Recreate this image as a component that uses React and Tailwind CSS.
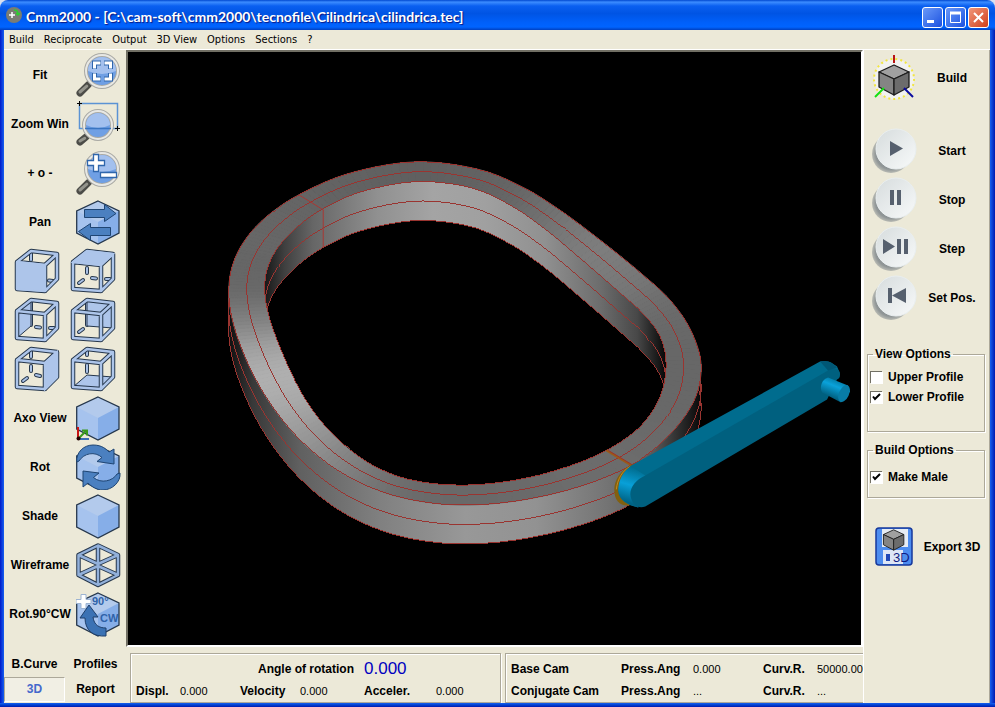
import { useState } from "react";

const MENU = ["Build", "Reciprocate", "Output", "3D View", "Options", "Sections", "?"];

// Cam body stations going round the ring: outer x, outer y, inner x, inner y, grey level
const STATIONS = [
  [299, 195, 323, 210, 100], [350, 174, 358, 193, 98], [415, 160, 418, 180, 96],
  [480, 170, 471, 188, 98], [523, 188, 509, 205, 104], [560, 210, 543, 227, 114],
  [603, 242, 580, 258, 128], [640, 273, 615, 289, 118], [671, 300, 644, 314, 108],
  [691, 330, 660, 336, 104], [702, 367, 667, 363, 103], [696, 400, 661, 398, 104],
  [667, 438, 641, 427, 106], [632, 466, 607, 451, 108], [580, 487, 565, 468, 108],
  [520, 501, 515, 481, 106], [463, 506, 463, 486, 105], [410, 500, 413, 481, 108],
  [370, 487, 380, 469, 118], [333, 468, 350, 450, 134], [300, 440, 325, 426, 152],
  [275, 410, 305, 399, 168], [256, 380, 291, 372, 176], [243, 351, 280, 346, 160],
  [233, 322, 270, 320, 128], [229, 295, 265, 294, 106], [232, 269, 267, 272, 103],
  [243, 243, 276, 251, 103], [266, 218, 295, 229, 102],
];

const WALL = 39;
const STEPS = 8;

// Fourth-difference fairing, takes the small wobble out of the loop without shrinking it
const fair = (pts) => {
  const n = pts.length;
  return pts.map((p, i) =>
    p.map((v, k) => {
      const at = (o) => pts[(i + o + n) % n][k];
      return v - (at(-2) - 4 * at(-1) + 6 * v - 4 * at(1) + at(2)) / 16;
    })
  );
};

// Closed Catmull-Rom through all the stations
const sampleStations = (stations) => {
  const n = stations.length;
  const out = [];
  for (let i = 0; i < n; i++) {
    const [a, b, c, d] = [-1, 0, 1, 2].map((k) => stations[(i + k + n) % n]);
    for (let s = 0; s < STEPS; s++) {
      const t = s / STEPS;
      out.push(
        b.map((v, k) =>
          0.5 * (2 * v + (c[k] - a[k]) * t + (2 * a[k] - 5 * v + 4 * c[k] - d[k]) * t * t + (3 * v - a[k] - 3 * c[k] + d[k]) * t * t * t)
        )
      );
    }
  }
  return out;
};

const SAMPLES = sampleStations(fair(STATIONS));
const toPath = (pts, dy = 0) => "M" + pts.map(([x, y]) => `${x.toFixed(1)},${(y + dy).toFixed(1)}`).join("L") + "Z";
const OUTER = SAMPLES.map((p) => [p[0], p[1]]);
const INNER = SAMPLES.map((p) => [p[2], p[3]]);
const MIDDLE = SAMPLES.map((p) => [(p[0] + p[2]) / 2, (p[1] + p[3]) / 2]);

const CamScene = () => (
  <svg viewBox="128 52 734 594" className="block h-full w-full" preserveAspectRatio="xMidYMid meet" role="img" aria-label="Cam">
    <defs>
      <linearGradient id="outerWall" gradientUnits="userSpaceOnUse" x1="229" y1="0" x2="702" y2="0">
        <stop offset="0" stopColor="#101010" />
        <stop offset="0.05" stopColor="#383838" />
        <stop offset="0.15" stopColor="#606060" />
        <stop offset="0.32" stopColor="#808080" />
        <stop offset="0.5" stopColor="#989898" />
        <stop offset="0.65" stopColor="#929292" />
        <stop offset="0.8" stopColor="#747474" />
        <stop offset="0.9" stopColor="#585858" />
        <stop offset="0.97" stopColor="#202020" />
        <stop offset="1" stopColor="#080808" />
      </linearGradient>
      <linearGradient id="innerWall" gradientUnits="userSpaceOnUse" x1="265" y1="0" x2="666" y2="0">
        <stop offset="0" stopColor="#181818" />
        <stop offset="0.05" stopColor="#404040" />
        <stop offset="0.12" stopColor="#666666" />
        <stop offset="0.28" stopColor="#909090" />
        <stop offset="0.42" stopColor="#a4a4a4" />
        <stop offset="0.55" stopColor="#a0a0a0" />
        <stop offset="0.7" stopColor="#909090" />
        <stop offset="0.84" stopColor="#6c6c6c" />
        <stop offset="0.93" stopColor="#484848" />
        <stop offset="1" stopColor="#080808" />
      </linearGradient>
      <linearGradient id="armCap" gradientUnits="userSpaceOnUse" x1="634" y1="468" x2="624" y2="502">
        <stop offset="0" stopColor="#006c8e" />
        <stop offset="0.5" stopColor="#08a0d8" />
        <stop offset="1" stopColor="#006284" />
      </linearGradient>
      <linearGradient id="pinBody" gradientUnits="userSpaceOnUse" x1="838" y1="378" x2="830" y2="398">
        <stop offset="0" stopColor="#007096" />
        <stop offset="0.4" stopColor="#0aa2da" />
        <stop offset="1" stopColor="#005a78" />
      </linearGradient>
      <clipPath id="bore">
        <path d={toPath(INNER)} />
      </clipPath>
    </defs>

    {/* outer wall */}
    <g fill="url(#outerWall)">
      <path d="M229,295L701,367V406L229,334Z" />
      <path d={toPath(OUTER, WALL)} stroke="#9a3430" shapeRendering="crispEdges" />
    </g>
    <path d={toPath(OUTER, WALL / 2)} fill="none" stroke="#9a3430" shapeRendering="crispEdges" />
    <path d="M229,295V334M701,367V406" stroke="#9a3430" shapeRendering="crispEdges" />

    {/* top face, one quad per sample */}
    {SAMPLES.map((p, i) => {
      const q = SAMPLES[(i + 1) % SAMPLES.length];
      const g = Math.round(p[4]);
      const fill = `rgb(${g},${g},${g})`;
      return (
        <path key={i} d={`M${p[0]},${p[1]}L${q[0]},${q[1]}L${q[2]},${q[3]}L${p[2]},${p[3]}Z`} fill={fill} stroke={fill} />
      );
    })}

    {/* bore */}
    <g clipPath="url(#bore)">
      <path d={toPath(INNER)} fill="url(#innerWall)" />
      <path d={toPath(INNER, WALL)} fill="#000" stroke="#9a3430" shapeRendering="crispEdges" />
      <path d={toPath(INNER, WALL / 2)} fill="none" stroke="#9a3430" shapeRendering="crispEdges" />
    </g>

    <g fill="none" stroke="#9a3430" shapeRendering="crispEdges">
      <path d={toPath(OUTER)} />
      <path d={toPath(MIDDLE)} />
      <path d={toPath(INNER)} />
    </g>
    <path d="M299,195L323.500,210V248" fill="none" stroke="#a83834" />

    {/* follower arm */}
    <path d="M607,451L632,466" stroke="#9a5a18" strokeWidth="2" />
    <path d="M609,451L634,466" stroke="#a03028" />
    <path d="M641,463C626,465 615,477 615,491C615,501 621,507 630,506L636,500L640,470Z" fill="#82600f" />
    <path d="M631,467C623,471 618,480 617,490" fill="none" stroke="#c08a20" />
    <path d="M632,466L821,362C829,360 834,364 838,367L841,374L645,478L639,508C629,506 619,501 619,491C620,480 625,471 632,466Z" fill="#006c8e" />
    <path d="M632,467C624,471 619,481 619,491C620,500 628,505 639,508L634,490L646,476Z" fill="url(#armCap)" />
    <path d="M646,476L829,371C836,366 841,370 841,375C841,378 840,379 838,380L828,400L646,507C638,510 632,504 631,495C631,487 637,480 646,476Z" fill="#00607f" />
    <path d="M821,362C829,360 834,364 838,368L829,371Z" fill="#005775" />
    <path d="M829,378C823,380 820,387 823,393L842,403L851,392L849,386Z" fill="url(#pinBody)" />
    <ellipse cx="845" cy="394" rx="5" ry="9" transform="rotate(25 845 394)" fill="#087ca6" />
  </svg>
);

const Lens = ({ cx, cy, r }) => (
  <>
    <path d={`M${cx - r * 0.85} ${cy + r * 0.85}L4 41`} stroke="#4c4c48" strokeWidth="7" strokeLinecap="round" />
    <path d={`M${cx - r * 0.95} ${cy + r * 0.95}L4 40`} stroke="#94948c" strokeWidth="3" strokeLinecap="round" />
    <circle cx={cx} cy={cy} r={r} fill="#6f9fe4" stroke="#a9a9a4" strokeWidth="4" />
    <circle cx={cx} cy={cy} r={r} fill="none" stroke="#e8e8e4" strokeWidth="2" />
    <path d={`M${cx - r + 2} ${cy}a${r - 2} ${r - 2} 0 0 1 ${2 * r - 4} 0q-${r - 2} 6 -${2 * r - 4} 0`} fill="#a3c0ee" />
  </>
);

const Icon = ({ children }) => (
  <svg width="46" height="46" viewBox="0 0 46 46" fill="none" aria-hidden="true" className="shrink-0">
    {children}
  </svg>
);

const FitIcon = () => (
  <Icon>
    <Lens cx={26} cy={19} r={16} />
    <g stroke="#2f66ac" strokeWidth="5">
      <path d="M18.500 17v-6h6.500M28 11h6.500v6M34.500 21v6h-6.500M25 27h-6.500v-6" />
    </g>
    <g stroke="#fff" strokeWidth="3">
      <path d="M18.500 16.500v-5.500h6M28.500 11h6v5.500M34.500 21.500v5.500h-6M24.500 27h-6v-5.500" />
    </g>
  </Icon>
);

const ZoomWinIcon = () => (
  <Icon>
    <path d="M3.500 2.500H41.500V27.500H3.500Z" stroke="#5b93d4" strokeWidth="1.500" />
    <Lens cx={22} cy={24} r={14} />
    <path d="M9 27.500H35" stroke="#3a74c0" strokeWidth="1.500" />
    <path d="M1 2.500h5M3.500 0v5M39 27.500h5M41.500 25v5" stroke="#000" />
  </Icon>
);

const PlusMinusIcon = () => (
  <Icon>
    <Lens cx={26} cy={19} r={16} />
    <g fill="#fff" stroke="#2f66ac" strokeWidth="1.300">
      <path d="M17.500 4.500h5v6h6v5h-6v6h-5v-6h-6v-5h6Z" />
      <path d="M24.500 22.500h16v5h-16Z" />
    </g>
  </Icon>
);

const HexCube = () => (
  <>
    <path d="M22 2L43 12V34L22 45L0.700 34V12Z" fill="#a6c3ee" />
    <path d="M22 2L43 12L22 23L0.700 12Z" fill="#b3caec" />
    <path d="M22 23L43 12V34L22 45Z" fill="#86aee8" />
    <path d="M22 2L43 12V34L22 45L0.700 34V12Z" stroke="#26374c" strokeWidth="1.300" />
  </>
);

const PanIcon = () => (
  <Icon>
    <HexCube />
    <g fill="#4b80c0" stroke="#1f4573">
      <path d="M8.500 10.500H28.500V5.500L40 14.500L28.500 22.500V18.500H8.500Z" />
      <path d="M34.500 28.500H14.500V24.500L2.500 32.500L14.500 41.500V36.500H34.500Z" />
    </g>
  </Icon>
);

const AxoIcon = () => (
  <Icon>
    <HexCube />
    <path d="M2 44H13" stroke="#3a6db5" strokeWidth="2" />
    <path d="M2 44V32" stroke="#c81414" strokeWidth="2" />
    <path d="M2 44L10 36M6 35.500h5v5" stroke="#3a9a1c" strokeWidth="2" />
    <circle cx="2.500" cy="43.500" r="2" fill="#200" />
  </Icon>
);

const RotIcon = () => (
  <Icon>
    <HexCube />
    <g fill="#4b80c0" stroke="#1f4573">
      <path d="M.8 18C0 8 8 1 17 1C26 1 30 5 33 8L38 5V20L21 17.500L26 13.500C19 7 8 9 3 17Z" />
      <path d="M44 29C45 38 36 46 27 46C20 46 15 42 12 39L7 43V27L23 29L17.500 33.500C25 40 37 37 41 30Z" />
    </g>
  </Icon>
);

const ShadeIcon = () => (
  <Icon>
    <HexCube />
  </Icon>
);

const WireIcon = () => {
  const d = "M22 3.500L42 13V33L22 43L2.500 33V13ZM2.500 13L22 22L42 13M22 3.500V43M2.500 33L22 24L42 33";
  return (
    <Icon>
      <path d={d} stroke="#26374c" strokeWidth="4.500" strokeLinejoin="round" />
      <path d={d} stroke="#92b0da" strokeWidth="2.500" strokeLinejoin="round" />
    </Icon>
  );
};

const Rot90Icon = () => (
  <Icon>
    <HexCube />
    <path d="M5 3.500h5v5h5v4h-5v5h-5v-5H0v-4h5Z" fill="#fff" stroke="#9db4d2" />
    <text x="16" y="14" fontSize="11" fontWeight="bold" fill="#2f62a8" className="font-['Liberation_Sans',sans-serif]">90°</text>
    <text x="24" y="31" fontSize="11" fontWeight="bold" fill="#2f62a8" className="font-['Liberation_Sans',sans-serif]">CW</text>
    <path d="M13 14L22 26H17C18 34 23 37 30 37V45C17 46 9 39 9 27H4Z" fill="#3b72b4" stroke="#1f3f6a" />
  </Icon>
);

const FACES = {
  front: "M3 14L31 17V43L3 41Z",
  top: "M3 14L17 3L43 6L31 17Z",
  left: "M3 14L17 3V29L3 41Z",
  back: "M17 3L43 6V31L17 29Z",
  right: "M31 17L43 6V31L31 43Z",
  bottom: "M3 41L17 29L43 31L31 43Z",
};

// What shows of the edges behind, per view
const HIDDEN = {
  front: "M17 4V12M35 32.500L39 33",
  top: "M17 20V25M9 35L13 32M22 30L26 30.500M36 31H40",
  left: "M17 4V28M22 30L26 30.500M36 31H40",
  back: "M17 4V28M9 35L13 32",
  right: "M17 4V11M17 20V25M9 35L13 32M22 29L26 30",
  bottom: "M17 5V9M17 19V26",
};

const CubeIcon = ({ face }) => {
  const frame = "M3 14L31 17V43L3 41ZM3 14L17 3L43 6L31 17M43 6V31L31 43";
  return (
    <Icon>
      <path d={HIDDEN[face]} stroke="#26374c" strokeWidth="4" strokeLinecap="round" />
      <path d={HIDDEN[face]} stroke="#a9c1e6" strokeWidth="2" strokeLinecap="round" />
      <path d={FACES[face]} fill="#adc5ea" stroke="#26374c" />
      <path d={frame} stroke="#26374c" strokeWidth="4.500" strokeLinejoin="round" />
      <path d={frame} stroke="#adc5ea" strokeWidth="2.500" strokeLinejoin="round" />
      {["front", "top", "right"].includes(face) && <path d={FACES[face]} fill="#adc5ea" stroke="#adc5ea" strokeWidth="2" />}
    </Icon>
  );
};

const GreyCube = () => (
  <g stroke="#1c1c1c" strokeWidth="1.300" strokeLinejoin="round">
    <path d="M23 10L38 17L23 24L8 17Z" fill="#a0a0a0" />
    <path d="M8 17L23 24V40L8 32Z" fill="#848484" />
    <path d="M38 17L23 24V40L38 32Z" fill="#6c6c6c" />
  </g>
);

const BuildIcon = () => (
  <Icon>
    <circle cx="23" cy="24" r="20" fill="#f2f2f0" stroke="#f2e640" strokeWidth="2" strokeDasharray="2 3" />
    <GreyCube />
    <path d="M23 0V8" stroke="#b81414" strokeWidth="2" />
    <path d="M13 33L4 42" stroke="#14e014" strokeWidth="2" />
    <path d="M33 33L42 42" stroke="#0a0aa0" strokeWidth="2" />
  </Icon>
);

const RoundIcon = ({ d }) => (
  <Icon>
    <defs>
      <linearGradient id="roundFace" x1="0" y1="0" x2="1" y2="1">
        <stop offset="0" stopColor="#d6dcdd" />
        <stop offset="1" stopColor="#f8fafa" />
      </linearGradient>
      <radialGradient id="roundShadow">
        <stop offset="0.8" stopColor="#8f9596" />
        <stop offset="1" stopColor="#b9bbb4" />
      </radialGradient>
    </defs>
    <circle cx="20" cy="26" r="19" fill="url(#roundShadow)" />
    <circle cx="25" cy="21" r="20" fill="url(#roundFace)" stroke="#e9eeef" />
    <path d={d} fill="#56606e" />
  </Icon>
);

const ExportIcon = () => (
  <Icon>
    <rect x="5" y="4" width="36" height="37" rx="3" fill="#4d8df0" stroke="#16389c" strokeWidth="1.500" />
    <rect x="11" y="5" width="26" height="18" fill="#e6ecf4" />
    <rect x="12" y="26" width="20" height="14" fill="#dde6f6" />
    <rect x="15" y="30" width="4" height="7" fill="#2048b8" />
    <g transform="translate(7 -1) scale(.68)">
      <GreyCube />
    </g>
    <text x="22" y="38" fontSize="13" fontWeight="normal" fill="#101c80" className="font-['Liberation_Sans',sans-serif]">3D</text>
  </Icon>
);

const TOOLS_TOP = [
  { label: "Fit", icon: <FitIcon /> },
  { label: "Zoom Win", icon: <ZoomWinIcon /> },
  { label: "+ o -", icon: <PlusMinusIcon /> },
  { label: "Pan", icon: <PanIcon /> },
];

const TOOLS_BOTTOM = [
  { label: "Axo View", icon: <AxoIcon /> },
  { label: "Rot", icon: <RotIcon /> },
  { label: "Shade", icon: <ShadeIcon /> },
  { label: "Wireframe", icon: <WireIcon /> },
  { label: "Rot.90°CW", icon: <Rot90Icon /> },
];

const PLAYBACK = [
  { label: "Start", d: "M19 13L32 20.500L19 28Z" },
  { label: "Stop", d: "M19 13h4v15h-4ZM26 13h4v15h-4Z" },
  { label: "Step", d: "M12 13L24 20.500L12 28ZM26 13h4v15h-4ZM33 13h4v15h-4Z" },
  { label: "Set Pos.", d: "M17 13h4v15h-4ZM35 13V28L21 20.500Z" },
];

const ToolRow = ({ label, icon }) => (
  <button type="button" className="flex h-[49px] w-full items-center">
    <span className="w-[72px] text-center whitespace-nowrap">{label}</span>
    {icon}
  </button>
);

const SideRow = ({ label, icon }) => (
  <button type="button" className="flex h-[49px] w-full items-center pl-1">
    {icon}
    <span className="flex-1 text-center whitespace-nowrap">{label}</span>
  </button>
);

const CheckRow = ({ label, checked, onChange }) => (
  <label className="flex h-5 items-center gap-[6px]">
    <span className="relative flex">
      <input
        type="checkbox"
        checked={checked}
        onChange={(e) => onChange(e.target.checked)}
        className="h-3 w-3 appearance-none border-t border-l border-[#716f64] bg-white shadow-[1px_1px_0_#fff]"
      />
      {checked && (
        <svg viewBox="0 0 12 12" className="pointer-events-none absolute inset-0 h-3 w-3" fill="none" stroke="#000" strokeWidth="2">
          <path d="M3 5.500L5 8L10 3" />
        </svg>
      )}
    </span>
    {label}
  </label>
);

const groupBox = "border border-[#aca899] shadow-[inset_1px_1px_0_#fff,1px_1px_0_#fff]";

const TitleBar = () => (
  <header className="flex h-[30px] items-center rounded-t-lg bg-[linear-gradient(#0048d0_0%,#3c8cff_7%,#0a5ff0_20%,#0054e4_45%,#0060fa_75%,#0064ff_90%,#0040c0_100%)] pr-[6px] pl-[6px]">
    <svg width="16" height="16" viewBox="0 0 16 16" fill="none" aria-hidden="true">
      <circle cx="8" cy="8" r="8" fill="#7a7c74" />
      <path d="M3 8h6M6 5v6" stroke="#fff" strokeWidth="1.500" />
      <path d="M8 3c3 0 4 2 4 4M10 6l2 2 2-2" stroke="#2cd02c" strokeWidth="1.500" />
    </svg>
    <h1 className="flex-1 truncate pt-1 pl-1 font-['Lato',sans-serif] text-[14px] font-bold text-white [text-shadow:1px_1px_1px_#0a1883]">
      Cmm2000 - [C:\cam-soft\cmm2000\tecnofile\Cilindrica\cilindrica.tec]
    </h1>
    <div className="flex gap-[2px] pt-1">
      <button type="button" aria-label="Minimize" className="h-[21px] w-[21px] rounded-[3px] border border-white bg-linear-to-br from-[#6a98f8] to-[#1c4fe0]">
        <svg viewBox="0 0 19 19" aria-hidden="true"><path d="M4 12h7v3H4Z" fill="#fff" /></svg>
      </button>
      <button type="button" aria-label="Maximize" className="h-[21px] w-[21px] rounded-[3px] border border-white bg-linear-to-br from-[#6a98f8] to-[#1c4fe0]">
        <svg viewBox="0 0 19 19" fill="none" stroke="#fff" aria-hidden="true"><path d="M4.500 5V14.500H14.500V5" /><path d="M4 5h11" strokeWidth="3" /></svg>
      </button>
      <button type="button" aria-label="Close" className="h-[21px] w-[21px] rounded-[3px] border border-white bg-linear-to-br from-[#f0967a] to-[#d03c12]">
        <svg viewBox="0 0 19 19" stroke="#fff" strokeWidth="2" aria-hidden="true"><path d="M5 5L14 14M14 5L5 14" /></svg>
      </button>
    </div>
  </header>
);

const StatusBar = () => (
  <div className="flex gap-1 overflow-hidden pt-[6px] pl-1">
    <dl className={`grid w-[371px] shrink-0 grid-cols-[44px_60px_60px_64px_72px_1fr] items-center pt-1 pl-[5px] leading-[22px] ${groupBox}`}>
      <dt className="col-span-4 pr-[10px] text-right">Angle of rotation</dt>
      <dd className="col-span-2 text-[17px] font-normal text-[#0000c0]">0.000</dd>
      <dt>Displ.</dt>
      <dd className="text-[11px] font-normal">0.000</dd>
      <dt>Velocity</dt>
      <dd className="text-[11px] font-normal">0.000</dd>
      <dt>Acceler.</dt>
      <dd className="text-[11px] font-normal">0.000</dd>
    </dl>
    <table className={`block flex-1 overflow-hidden border-r-0 pt-1 pl-[5px] leading-[22px] whitespace-nowrap ${groupBox}`}>
      <tbody>
        {[["Base Cam", "0.000", "50000.00"], ["Conjugate Cam", "...", "..."]].map(([name, ang, curv]) => (
          <tr key={name}>
            <th className="w-[110px] min-w-[110px] p-0 text-left">{name}</th>
            <th className="w-[72px] min-w-[72px] p-0 text-left">Press.Ang</th>
            <td className="w-[70px] min-w-[70px] p-0 text-[11px] font-normal">{ang}</td>
            <th className="w-[54px] min-w-[54px] p-0 text-left">Curv.R.</th>
            <td className="p-0 text-[11px] font-normal">{curv}</td>
          </tr>
        ))}
      </tbody>
    </table>
  </div>
);

const App = () => {
  const [upper, setUpper] = useState(false);
  const [lower, setLower] = useState(true);
  const [male, setMale] = useState(true);

  return (
    <div className="flex min-h-screen flex-col bg-[#d8e0f0] font-['Liberation_Sans',sans-serif] text-xs font-bold text-black">
      <TitleBar />
      <div className="flex flex-1 flex-col bg-[linear-gradient(90deg,#0019c8,#1660f0_4px,#1660f0_calc(100%-5px),#0019b0)] pr-[5px] pl-1">
        <nav className="flex h-5 items-center gap-[10px] border-b border-white bg-[#ece9d8] pt-[1px] pl-[5px] font-['DejaVu_Sans_Condensed','DejaVu_Sans',sans-serif] text-[11px] font-normal">
          {MENU.map((item) => (
            <button type="button" key={item}>{item}</button>
          ))}
        </nav>

        <main className="flex flex-1 bg-[#ece9d8]">
          <aside className="flex w-[122px] shrink-0 flex-col">
            {TOOLS_TOP.map((tool) => (
              <ToolRow key={tool.label} {...tool} />
            ))}
            {[["front", "top"], ["left", "back"], ["right", "bottom"]].map((pair) => (
              <div key={pair[0]} className="flex h-[49px] items-center gap-[10px] pl-[10px]">
                {pair.map((face) => (
                  <button type="button" key={face} aria-label={`${face} view`}>
                    <CubeIcon face={face} />
                  </button>
                ))}
              </div>
            ))}
            {TOOLS_BOTTOM.map((tool) => (
              <ToolRow key={tool.label} {...tool} />
            ))}
            <div className="mt-auto grid grid-cols-2 pb-[1px] leading-[25px]">
              <button type="button">B.Curve</button>
              <button type="button">Profiles</button>
              <button type="button" className="border border-t-[#aca899] border-r-white border-b-white border-l-[#aca899] bg-[#f1efe4] leading-[23px] text-[#4468cc]">
                3D
              </button>
              <button type="button">Report</button>
            </div>
          </aside>

          <div className="flex min-w-0 flex-1 flex-col">
            <section className="flex-1 border-2 border-t-[#716f64] border-r-white border-b-white border-l-[#716f64] bg-black">
              <CamScene />
            </section>
            <StatusBar />
          </div>

          <aside className="w-[127px] shrink-0 border-r border-l border-r-[#aca899] border-l-white pt-[3px] pr-[2px] pl-[3px]">
            <SideRow label="Build" icon={<BuildIcon />} />
            <div className="pt-6">
              {PLAYBACK.map(({ label, d }) => (
                <SideRow key={label} label={label} icon={<RoundIcon d={d} />} />
              ))}
            </div>
            <fieldset className={`mt-6 mr-[2px] h-[86px] ${groupBox}`}>
              <legend className="ml-[5px] px-[2px]">View Options</legend>
              <div className="pt-[5px] pl-[2px]">
                <CheckRow label="Upper Profile" checked={upper} onChange={setUpper} />
                <CheckRow label="Lower Profile" checked={lower} onChange={setLower} />
              </div>
            </fieldset>
            <fieldset className={`mt-[10px] mr-[2px] h-14 ${groupBox}`}>
              <legend className="ml-[5px] px-[2px]">Build Options</legend>
              <div className="pt-[9px] pl-[2px]">
                <CheckRow label="Make Male" checked={male} onChange={setMale} />
              </div>
            </fieldset>
            <div className="pt-6">
              <SideRow label="Export 3D" icon={<ExportIcon />} />
            </div>
          </aside>
        </main>
      </div>
      <div className="h-1 bg-linear-to-b from-[#1660f0] to-[#0019b0]" />
    </div>
  );
};

export default App;
